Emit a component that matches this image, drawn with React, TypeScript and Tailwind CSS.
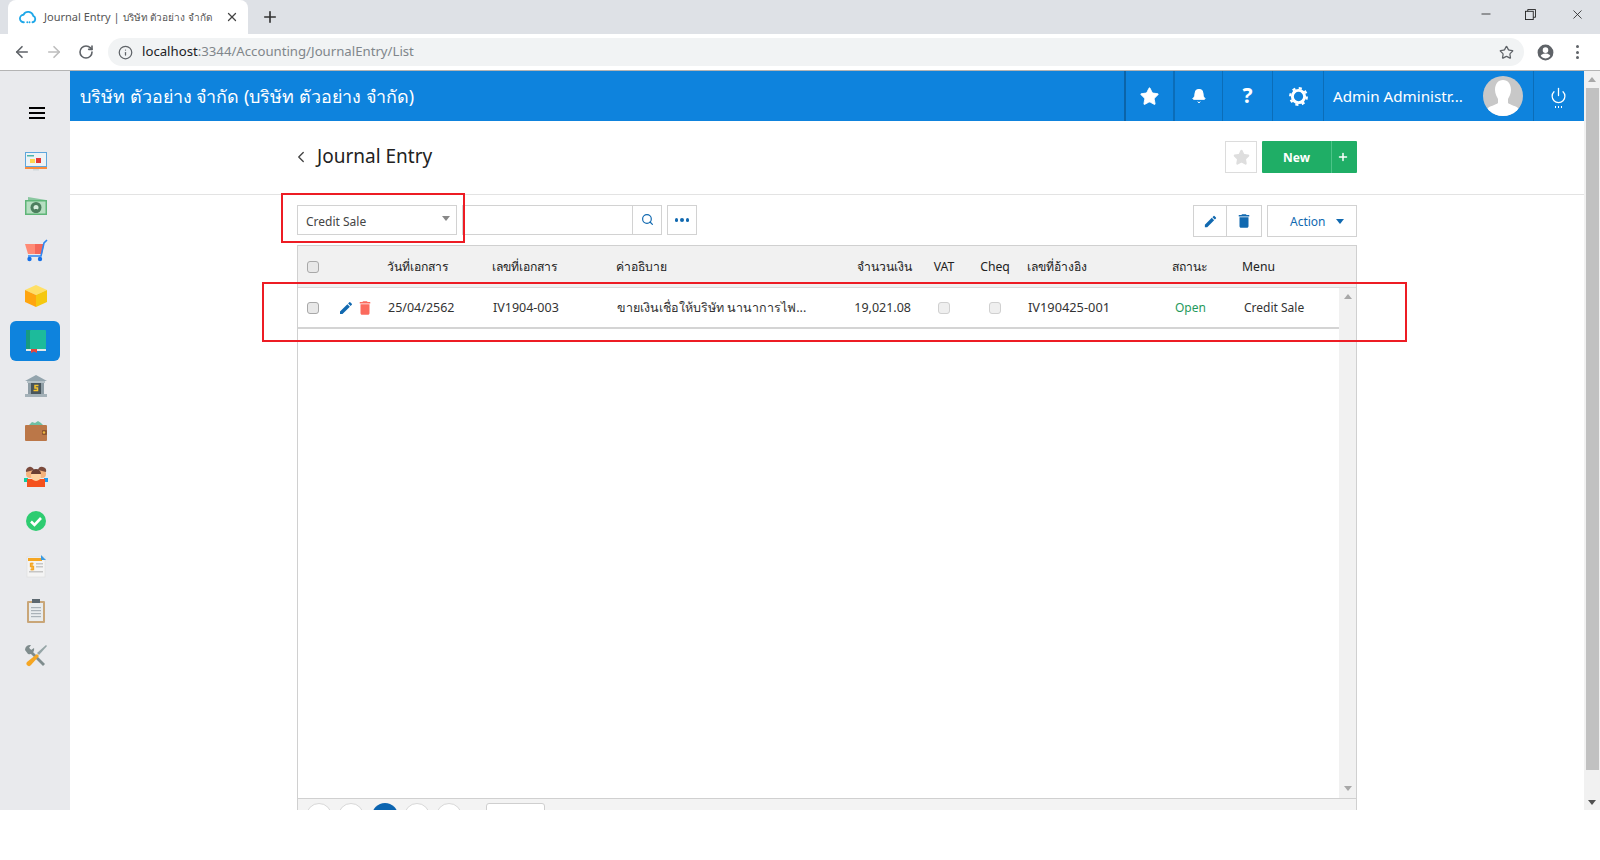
import { Star, Bell, Power, Search, ChevronLeft, Plus, X, ArrowLeft, ArrowRight, RotateCw, Info, Minus } from "lucide-react";

const FONT = "font-['Noto_Sans','DejaVu_Sans',sans-serif]";

const PencilIcon = ({ className }: { className: string }) => (
  <svg viewBox="0 0 24 24" className={className} fill="currentColor">
    <path d="M3 17.25V21h3.75L17.81 9.94l-3.75-3.75L3 17.25zM20.71 7.04a1 1 0 0 0 0-1.41l-2.34-2.34a1 1 0 0 0-1.41 0l-1.83 1.83 3.75 3.75 1.83-1.83z" />
  </svg>
);

const TrashIcon = ({ className }: { className: string }) => (
  <svg viewBox="0 0 24 24" className={className} fill="currentColor">
    <path d="M6 19c0 1.1.9 2 2 2h8c1.1 0 2-.9 2-2V7H6v12zM19 4h-3.5l-1-1h-5l-1 1H5v2h14V4z" />
  </svg>
);

const Check = ({ muted }: { muted?: boolean }) => (
  <span
    className={`block w-[12px] h-[12px] rounded-[3px] border ${muted ? "border-[#d0d0d0] bg-[#efefef]" : "border-[#a8a8a8] bg-[#e8e8e8]"}`}
  />
);

const sideIcons = [
  <svg viewBox="0 0 24 24" className="w-[24px] h-[24px]">
    <rect x="1" y="3" width="22" height="15" fill="#5ea6dc" />
    <rect x="2" y="4" width="20" height="13" fill="#eef3f5" />
    <rect x="3" y="6" width="7" height="1.5" fill="#4db6ac" />
    <rect x="12" y="9" width="5" height="5" fill="#e53935" />
    <rect x="6" y="10" width="5" height="4" fill="#ffd54f" />
    <rect x="1" y="18" width="22" height="2" fill="#fb8c3c" />
    <rect x="9" y="20" width="6" height="1.5" fill="#cfd8dc" />
  </svg>,
  <svg viewBox="0 0 24 24" className="w-[24px] h-[24px]">
    <path d="M4 3l18 3v4H4z" fill="#8ac7a0" />
    <rect x="1" y="6" width="22" height="15" fill="#5fb578" />
    <rect x="2.5" y="7.5" width="19" height="12" fill="#b7dfc2" />
    <circle cx="12" cy="13.5" r="5.5" fill="#4d7f5e" />
    <circle cx="12" cy="13.5" r="2.5" fill="#d7eedd" />
    <rect x="10.5" y="15" width="3" height="4" fill="#4d7f5e" />
  </svg>,
  <svg viewBox="0 0 24 24" className="w-[24px] h-[24px]">
    <path d="M1 5h19l-2 10H4z" fill="#ff8a75" />
    <path d="M11 5h9l-2 10h-7z" fill="#f4685a" />
    <path d="M23 1l-3 3-3 13H4" fill="none" stroke="#2e86f0" strokeWidth="1.6" />
    <circle cx="5.500" cy="20" r="2.200" fill="#1670e8" />
    <circle cx="16" cy="20" r="2.200" fill="#1670e8" />
  </svg>,
  <svg viewBox="0 0 24 24" className="w-[24px] h-[24px]">
    <path d="M12 1l11 5-11 5L1 6z" fill="#ffe066" />
    <path d="M1 6l11 5v12L1 18z" fill="#ffa50f" />
    <path d="M23 6l-11 5v12l11-5z" fill="#f5c80f" />
  </svg>,
  <svg viewBox="0 0 24 24" className="w-[24px] h-[24px]">
    <rect x="2" y="1" width="5" height="19" fill="#179a80" />
    <rect x="6" y="1" width="16" height="19" rx="1" fill="#1dbb9b" />
    <rect x="2" y="20" width="20" height="2" fill="#e2e8ea" />
    <path d="M7 20h6v4l-3-1.500L7 24z" fill="#e6443c" />
  </svg>,
  <svg viewBox="0 0 24 24" className="w-[24px] h-[24px]">
    <path d="M12 1l11 6H1z" fill="#93a4ad" />
    <rect x="3" y="7" width="18" height="2" fill="#b5c1c7" />
    <rect x="4" y="9" width="16" height="11" fill="#8e9da5" />
    <rect x="7" y="9" width="10" height="11" fill="#48555c" />
    <rect x="1" y="20" width="22" height="3" fill="#a4b1b8" />
    <path d="M14.500 11.500h-3.500v2.500h2.500v2.500H9.500" fill="none" stroke="#f5c32c" strokeWidth="1.500" />
  </svg>,
  <svg viewBox="0 0 24 24" className="w-[24px] h-[24px]">
    <path d="M5 6l3-3 3 1 3-2 3 2 2 2v2H5z" fill="#6fbfa3" />
    <rect x="1" y="6" width="22" height="16" rx="1" fill="#bb7748" />
    <rect x="18" y="11" width="5" height="5" rx="1" fill="#8c5530" />
    <circle cx="20" cy="13.500" r="1.200" fill="#f0b840" />
  </svg>,
  <svg viewBox="0 0 24 24" className="w-[24px] h-[24px]">
    <circle cx="6" cy="10" r="4" fill="#f5b37d" />
    <circle cx="18" cy="10" r="4" fill="#f5b37d" />
    <path d="M2 8a4 4 0 0 1 8-2l-4 1zM22 8a4 4 0 0 0-8-2l4 1z" fill="#7b4a3c" />
    <rect x="0" y="14" width="4" height="4" fill="#10cfa0" />
    <rect x="20" y="14" width="4" height="4" fill="#1a9bf0" />
    <rect x="3" y="15" width="18" height="8" fill="#f4511e" />
    <circle cx="12" cy="12" r="5" fill="#ffd2a0" />
    <path d="M7 10a5 5 0 0 1 10 0z" fill="#6b3f33" />
  </svg>,
  <svg viewBox="0 0 24 24" className="w-[24px] h-[24px]">
    <circle cx="12" cy="12" r="10" fill="#2ecc71" />
    <path d="M7 12.500l3.500 3.500L17 9" fill="none" stroke="#fff" strokeWidth="2.600" />
  </svg>,
  <svg viewBox="0 0 24 24" className="w-[24px] h-[24px]">
    <rect x="3" y="3" width="18" height="20" fill="#f4f4f4" stroke="#dcdcdc" strokeWidth="0.600" />
    <rect x="4" y="4" width="14" height="3" fill="#f5a623" />
    <path d="M17 1l5 5-5 0z" fill="#3d9be0" />
    <rect x="12" y="9" width="7" height="1.500" fill="#c6c6c6" />
    <rect x="12" y="12" width="7" height="1.500" fill="#c6c6c6" />
    <rect x="5" y="17" width="14" height="1.500" fill="#c6c6c6" />
    <path d="M9.500 9.500H6.500v3h3v3h-3M8 8.500v8" fill="none" stroke="#f5a623" strokeWidth="1.300" />
  </svg>,
  <svg viewBox="0 0 24 24" className="w-[24px] h-[24px]">
    <rect x="3" y="2" width="18" height="22" rx="1" fill="#c9a678" />
    <rect x="5" y="4" width="14" height="18" fill="#e8ecee" />
    <rect x="8" y="0" width="8" height="4" fill="#5c6870" />
    <rect x="7" y="8" width="10" height="1.200" fill="#a9b2b8" />
    <rect x="7" y="11" width="10" height="1.200" fill="#a9b2b8" />
    <rect x="7" y="14" width="10" height="1.200" fill="#a9b2b8" />
    <rect x="7" y="17" width="10" height="1.200" fill="#a9b2b8" />
  </svg>,
  <svg viewBox="0 0 24 24" className="w-[24px] h-[24px]">
    <path d="M4 3l17 17-2 2L2 5z" fill="#7f8c8d" />
    <path d="M1 6a5 5 0 0 1 6-5L5 4l2 2 3-2a5 5 0 0 1-6 6z" fill="#7f8c8d" />
    <path d="M22 1l1 1-8 9-2-2z" fill="#95a5a6" />
    <path d="M13 10l2 2-8 9a2 2 0 0 1-4-3z" fill="#f5a623" />
  </svg>,
];

const GearIcon = () => (
  <svg viewBox="0 0 24 24" className="w-[21px] h-[21px]" fill="none" stroke="#fff">
    <circle cx="12" cy="12" r="7" strokeWidth="3.4" />
    <circle cx="12" cy="12" r="9.500" strokeWidth="2.600" strokeDasharray="3.500 3.960" />
  </svg>
);

const headCell = "text-[12.2px] text-[#222] whitespace-nowrap pt-[1px]";
const rowCell = "text-[12.5px] text-[#333] whitespace-nowrap pt-[1px]";
const cols = "grid grid-cols-[89px_105px_124px_200px_96px_64px_38px_158px_70px_1fr] items-center";

const App = () => {
  return (
    <div className={`relative w-[1600px] h-[860px] bg-white overflow-hidden ${FONT}`}>
      <div className="h-[810px] flex flex-col overflow-hidden">
        {/* browser tab strip */}
        <div className="h-[34px] bg-[#dee1e6] flex items-end pl-[8px] shrink-0">
          <div className="w-[240px] h-[34px] bg-white rounded-t-[8px] flex items-center pl-[11px] pr-[9px]">
            <svg viewBox="0 0 24 24" className="w-[18px] h-[18px] shrink-0" fill="none" stroke="#1ea7e8" strokeWidth="2.400" strokeLinecap="round">
              <path d="M6.500 19a5 5 0 0 1-.5-10 7 7 0 0 1 13 1.500A4.500 4.500 0 0 1 18 19M11 19h.1M14 19h.1" />
            </svg>
            <span className="ml-[7px] text-[11px] text-[#555] whitespace-nowrap flex-1">
              Journal Entry | <span className="text-[10px]">บริษัท ตัวอย่าง จำกัด</span>
            </span>
            <X className="w-[14px] h-[14px] text-[#444] ml-[8px] shrink-0" strokeWidth={2.2} />
          </div>
          <Plus className="w-[18px] h-[18px] text-[#333] ml-[13px] mb-[8px]" strokeWidth={2.2} />
          <div className="ml-auto flex items-center h-[28px] self-start text-[#222]">
            <Minus className="w-[14px] h-[14px] mr-[32px]" strokeWidth={1.4} />
            <svg viewBox="0 0 12 12" className="w-[11px] h-[11px] mr-[34px]" fill="none" stroke="currentColor">
              <rect x="0.500" y="2.500" width="8.500" height="9" />
              <path d="M3 2.500V.500h8.500V9H9" />
            </svg>
            <X className="w-[15px] h-[15px] mr-[15px]" strokeWidth={1.3} />
          </div>
        </div>

        {/* address bar */}
        <div className="h-[37px] bg-white border-b border-[#b4b4b4] flex items-center shrink-0">
          <ArrowLeft className="w-[18px] h-[18px] text-[#5f6368] ml-[13px]" strokeWidth={2.2} />
          <ArrowRight className="w-[18px] h-[18px] text-[#bdbdbd] ml-[14px]" strokeWidth={2.2} />
          <RotateCw className="w-[16px] h-[16px] text-[#5f6368] ml-[15px]" strokeWidth={2.4} />
          <div className="ml-[14px] w-[1416px] h-[28px] rounded-full bg-[#f1f3f4] flex items-center pl-[10px] pr-[10px]">
            <Info className="w-[15px] h-[15px] text-[#5f6368]" strokeWidth={2} />
            <span className="ml-[9px] text-[13.2px] text-[#202124]">localhost</span>
            <span className="text-[13.2px] text-[#80868b]">:3344/Accounting/JournalEntry/List</span>
            <Star className="w-[15px] h-[15px] text-[#5f6368] ml-auto" strokeWidth={2} />
          </div>
          <svg viewBox="0 0 24 24" className="w-[19px] h-[19px] ml-[12px]" fill="#5f6368">
            <path d="M12 2a10 10 0 1 0 0 20 10 10 0 0 0 0-20zm0 3.500a3.500 3.500 0 1 1 0 7 3.500 3.500 0 0 1 0-7zm0 14a7.500 7.500 0 0 1-6-3c.1-2 4-3.100 6-3.100s5.900 1.100 6 3.100a7.500 7.500 0 0 1-6 3z" />
          </svg>
          <div className="ml-[21px] flex flex-col gap-[2.500px]">
            <span className="w-[3px] h-[3px] rounded-full bg-[#5f6368]" />
            <span className="w-[3px] h-[3px] rounded-full bg-[#5f6368]" />
            <span className="w-[3px] h-[3px] rounded-full bg-[#5f6368]" />
          </div>
        </div>

        <div className="flex-1 flex min-h-0">
          {/* sidebar */}
          <aside className="w-[70px] bg-[#e9eaed] shrink-0 flex flex-col items-center">
            <div className="h-[70px] w-full flex items-center justify-center pl-[3px] pt-[14px]">
              <div className="flex flex-col gap-[3px]">
                <span className="block w-[16px] h-[2px] bg-black" />
                <span className="block w-[16px] h-[2px] bg-black" />
                <span className="block w-[16px] h-[2px] bg-black" />
              </div>
            </div>
            <div className="flex flex-col items-center gap-[5px]">
              {sideIcons.map((icon, i) => (
                <div
                  key={i}
                  className={`w-[50px] h-[40px] pl-[1px] flex items-center justify-center rounded-[6px] ${i === 4 ? "bg-[#0e83dd]" : ""}`}
                >
                  {icon}
                </div>
              ))}
            </div>
          </aside>

          <div className="flex-1 flex flex-col min-w-0">
            {/* blue header */}
            <header className="h-[50px] bg-[#0e83dd] flex items-center text-white shrink-0">
              <span className="ml-[10px] text-[17.9px] whitespace-nowrap">บริษัท ตัวอย่าง จำกัด (บริษัท ตัวอย่าง จำกัด)</span>
              <div className="ml-auto flex h-full">
                <div className="w-[49px] border-l-2 border-[#0b64a8] flex items-center justify-center">
                  <Star className="w-[21px] h-[21px]" fill="#fff" strokeWidth={1} />
                </div>
                <div className="w-[49px] border-l-2 border-[#0b6db8] flex items-center justify-center">
                  <Bell className="w-[16px] h-[16px]" fill="#fff" strokeWidth={1.5} />
                </div>
                <div className="w-[50px] border-l border-[#0b6db8] flex items-center justify-center text-[21px] font-bold">
                  ?
                </div>
                <div className="w-[51px] border-l border-[#0b6db8] flex items-center justify-center">
                  <GearIcon />
                </div>
                <div className="w-[210px] border-l border-[#0b6db8] flex items-center pl-[9px]">
                  <span className="text-[15.2px] whitespace-nowrap">Admin Administr...</span>
                  <div className="ml-auto mr-[10px] w-[40px] h-[40px] rounded-full bg-[#c8c8c8] overflow-hidden shrink-0">
                    <svg viewBox="0 0 40 40" className="w-[40px] h-[40px]" fill="#fff">
                      <path d="M20 4c5 0 8 4 8 10 0 4-2 7-3 9v4c2 2 9 3 11 6v7H4v-7c2-3 9-4 11-6v-4c-1-2-3-5-3-9 0-6 3-10 8-10z" />
                    </svg>
                  </div>
                </div>
                <div className="w-[51px] border-l border-[#0b6db8] flex flex-col items-center justify-center gap-[2px] pt-[3px] pr-[1px]">
                  <Power className="w-[17px] h-[17px]" strokeWidth={1.800} />
                  <div className="flex gap-[1.500px]">
                    <span className="w-[1.500px] h-[1.500px] bg-white" />
                    <span className="w-[1.500px] h-[1.500px] bg-white" />
                    <span className="w-[1.500px] h-[1.500px] bg-white" />
                  </div>
                </div>
              </div>
            </header>

            {/* page content */}
            <main className="flex-1 min-h-0 flex flex-col">
              <div className="h-[74px] border-b border-[#e3e3e3] shrink-0 flex">
                <div className="ml-[227px] w-[1060px] flex items-start justify-between pt-[20px]">
                  <div className="flex items-center h-[32px] pb-[1px]">
                    <ChevronLeft className="w-[18px] h-[18px] text-[#444] -ml-[5px]" strokeWidth={1.800} />
                    <h1 className="ml-[7px] text-[19px] text-[#222]">Journal Entry</h1>
                  </div>
                  <div className="flex items-center">
                    <div className="w-[32px] h-[32px] border border-[#dcdcdc] flex items-center justify-center">
                      <Star className="w-[17px] h-[17px] text-[#dedede]" fill="#dedede" />
                    </div>
                    <div className="ml-[5px] w-[95px] h-[32px] bg-[#1fae66] rounded-[1px] flex text-white">
                      <span className="w-[69px] flex items-center justify-center text-[12px] font-bold pt-[2px]">New</span>
                      <span className="flex-1 border-l border-[#4cc488] flex items-center justify-center pr-[3px]">
                        <Plus className="w-[12px] h-[12px]" strokeWidth={3} />
                      </span>
                    </div>
                  </div>
                </div>
              </div>

              <div className="ml-[227px] w-[1060px] flex-1 flex flex-col min-h-0 pt-[10px]">
                {/* filter row */}
                <div className="flex items-start h-[40px] shrink-0">
                  <div className="w-[160px] h-[30px] border border-[#d2d2d2] flex items-center pl-[8px] pr-[6px] text-[12px] text-[#444]">
                    <span className="pt-[4px]">Credit Sale</span>
                    <span className="ml-auto mb-[3px] border-x-[4px] border-x-transparent border-t-[5px] border-t-[#888]" />
                  </div>
                  <div className="ml-[5px] w-[200px] h-[30px] border border-[#d2d2d2] flex justify-end">
                    <div className="w-[29px] border-l border-[#d2d2d2] flex items-center justify-center pb-[1px]">
                      <Search className="w-[13px] h-[13px] text-[#1169b0]" strokeWidth={2.2} />
                    </div>
                  </div>
                  <div className="ml-[5px] w-[30px] h-[30px] border border-[#d2d2d2] flex items-center justify-center gap-[2px]">
                    <span className="w-[3.500px] h-[3.500px] rounded-full bg-[#1169b0]" />
                    <span className="w-[3.500px] h-[3.500px] rounded-full bg-[#1169b0]" />
                    <span className="w-[3.500px] h-[3.500px] rounded-full bg-[#1169b0]" />
                  </div>
                  <div className="ml-auto flex">
                    <div className="w-[34px] h-[32px] border border-[#d2d2d2] flex items-center justify-center">
                      <PencilIcon className="w-[15px] h-[15px] text-[#1169b0]" />
                    </div>
                    <div className="w-[35px] h-[32px] border border-l-0 border-[#d2d2d2] flex items-center justify-center">
                      <TrashIcon className="w-[18px] h-[18px] text-[#1169b0]" />
                    </div>
                    <div className="ml-[5px] w-[90px] h-[32px] border border-[#d2d2d2] flex items-center pl-[22px] text-[12px] text-[#1169b0]">
                      <span className="pt-[2px]">Action</span>
                      <span className="ml-[10px] border-x-[4px] border-x-transparent border-t-[5px] border-t-[#1169b0]" />
                    </div>
                  </div>
                </div>

                {/* table */}
                <div className="flex-1 min-h-0 border-x border-t border-[#d0d0d0] flex flex-col overflow-hidden">
                  <div className={`${cols} h-[42px] bg-[#f1f1f1] border-b border-[#dcdcdc] shrink-0`}>
                    <span className="pl-[9px]"><Check /></span>
                    <span className={headCell}>วันที่เอกสาร</span>
                    <span className={headCell}>เลขที่เอกสาร</span>
                    <span className={headCell}>ค่าอธิบาย</span>
                    <span className={`${headCell} text-right`}>จำนวนเงิน</span>
                    <span className={`${headCell} text-center`}>VAT</span>
                    <span className={`${headCell} text-center`}>Cheq</span>
                    <span className={`${headCell} pl-[13px]`}>เลขที่อ้างอิง</span>
                    <span className={headCell}>สถานะ</span>
                    <span className={headCell}>Menu</span>
                  </div>
                  <div className="flex-1 min-h-0 flex">
                    <div className="flex-1 min-w-0">
                      <div className={`${cols} h-[41px] border-b-2 border-[#d4d4d4]`}>
                        <div className="flex items-center pl-[9px]">
                          <Check />
                          <PencilIcon className="w-[16px] h-[16px] text-[#1169b0] ml-[19px]" />
                          <TrashIcon className="w-[18px] h-[18px] text-[#fb6a5d] ml-[2px]" />
                        </div>
                        <span className={`${rowCell} pl-[1px]`}>25/04/2562</span>
                        <span className={`${rowCell} pl-[1px]`}>IV1904-003</span>
                        <span className={`${rowCell} pl-[1px] text-[12.3px]`}>ขายเงินเชื่อให้บริษัท นานาการไฟ...</span>
                        <span className={`${rowCell} text-right pr-[1px]`}>19,021.08</span>
                        <span className="flex justify-center"><Check muted /></span>
                        <span className="flex justify-center"><Check muted /></span>
                        <span className={`${rowCell} pl-[14px] text-[12.8px]`}>IV190425-001</span>
                        <span className="text-[12px] text-[#1f9a5c] pl-[3px] pt-[1px]">Open</span>
                        <span className="text-[12px] text-[#333] pl-[2px] pt-[1px]">Credit Sale</span>
                      </div>
                    </div>
                    <div className="w-[17px] bg-[#f1f1f1] flex flex-col items-center justify-between pt-[6px] pb-[7px] shrink-0">
                      <span className="border-x-[4px] border-x-transparent border-b-[5px] border-b-[#a8a8a8]" />
                      <span className="border-x-[4px] border-x-transparent border-t-[5px] border-t-[#a8a8a8]" />
                    </div>
                  </div>
                  {/* pagination, cut off by the bottom of the window */}
                  <div className="h-[12px] bg-[#f3f3f3] border-t border-[#d0d0d0] shrink-0 flex items-start pl-[8px] pt-[4px] overflow-hidden">
                    <span className="w-[26px] h-[26px] rounded-full border border-[#d8d8d8] bg-white shrink-0" />
                    <span className="ml-[6px] w-[26px] h-[26px] rounded-full border border-[#d8d8d8] bg-white shrink-0" />
                    <span className="ml-[8px] w-[26px] h-[26px] rounded-full bg-[#0b64b0] shrink-0" />
                    <span className="ml-[6px] w-[26px] h-[26px] rounded-full border border-[#d8d8d8] bg-white shrink-0" />
                    <span className="ml-[6px] w-[26px] h-[26px] rounded-full border border-[#d8d8d8] bg-white shrink-0" />
                    <span className="ml-[24px] w-[59px] h-[26px] rounded-[3px] border border-[#cfcfcf] bg-white shrink-0" />
                  </div>
                </div>
              </div>
            </main>
          </div>

          {/* page scrollbar */}
          <div className="w-[16px] bg-[#f1f1f1] shrink-0 flex flex-col items-center">
            <span className="mt-[6px] border-x-[4px] border-x-transparent border-b-[5px] border-b-[#a8a8a8]" />
            <div className="mt-[6px] w-[13px] h-[682px] bg-[#c1c1c1]" />
            <span className="mt-[30px] border-x-[4px] border-x-transparent border-t-[5px] border-t-[#505050]" />
          </div>
        </div>
      </div>

      {/* red annotation boxes drawn over the screenshot */}
      <div className="absolute left-[281px] top-[193px] w-[184px] h-[50px] border-2 border-[#ed1c24]" />
      <div className="absolute left-[262px] top-[282px] w-[1145px] h-[60px] border-2 border-[#ed1c24]" />
    </div>
  );
};

export default App;
